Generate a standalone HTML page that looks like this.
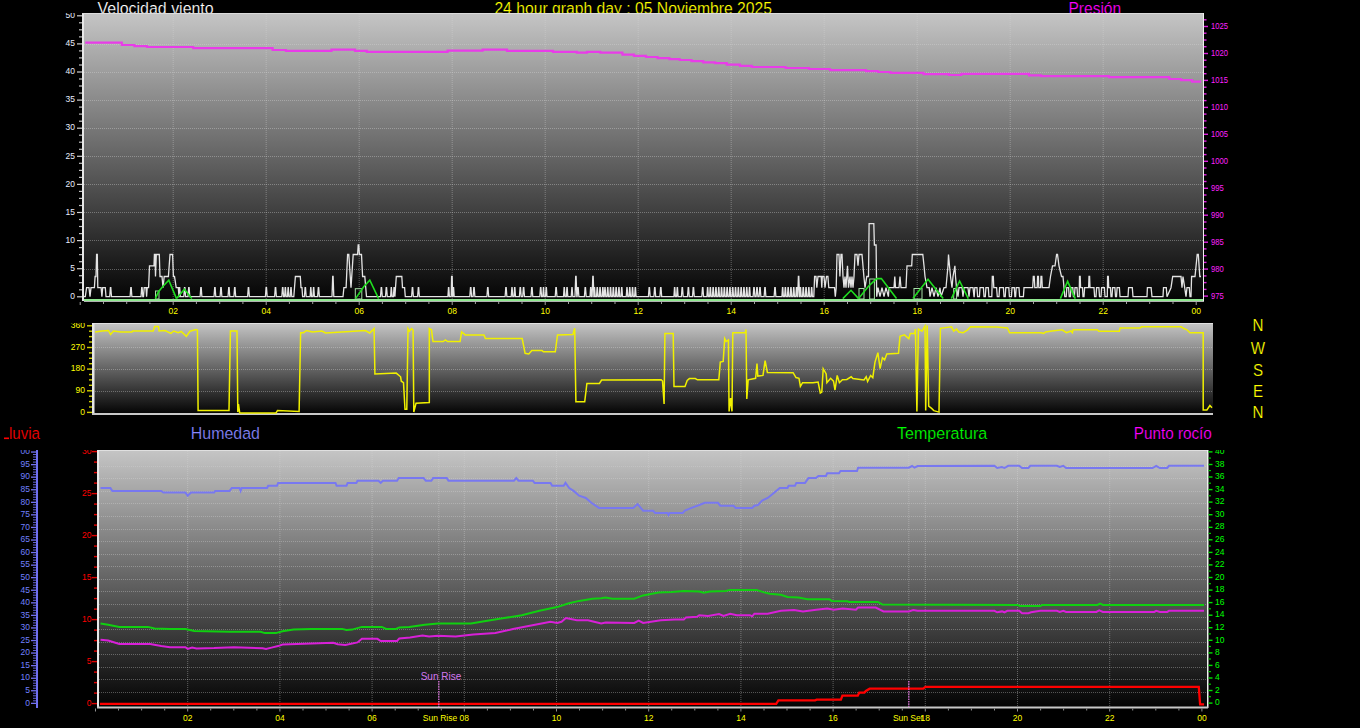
<!DOCTYPE html>
<html><head><meta charset="utf-8"><style>
html,body{margin:0;padding:0;background:#000;width:1360px;height:728px;overflow:hidden}
svg{display:block}
text{font-family:"Liberation Sans", sans-serif}
</style></head><body>
<svg width="1360" height="728" viewBox="0 0 1360 728">
<rect width="1360" height="728" fill="#000"/>
<defs>
<linearGradient id="g1" x1="0" y1="0" x2="0" y2="1"><stop offset="0" stop-color="#c5c5c5"/><stop offset="1" stop-color="#030303"/></linearGradient>
<linearGradient id="g2" x1="0" y1="0" x2="0" y2="1"><stop offset="0" stop-color="#c5c5c5"/><stop offset="1" stop-color="#030303"/></linearGradient>
<linearGradient id="g3" x1="0" y1="0" x2="0" y2="1"><stop offset="0" stop-color="#c5c5c5"/><stop offset="1" stop-color="#030303"/></linearGradient>
<clipPath id="c1"><rect x="84" y="14" width="1119" height="287"/></clipPath>
<clipPath id="c2"><rect x="94" y="324" width="1119" height="90"/></clipPath>
<clipPath id="c3"><rect x="99" y="451" width="1109" height="256"/></clipPath>
<clipPath id="t1"><rect x="0" y="13" width="1360" height="300"/></clipPath>
<clipPath id="t2"><rect x="0" y="323" width="1360" height="100"/></clipPath>
<clipPath id="t3"><rect x="0" y="450" width="1360" height="278"/></clipPath>
</defs>
<text transform="translate(97.60,14) scale(0.9382,1)" x="0" y="0" fill="#ffffff" font-size="17" stroke="#000" stroke-width="0.2">Velocidad viento</text>
<text transform="translate(494.38,14) scale(0.9247,1)" x="0" y="0" fill="#ffff00" font-size="17" stroke="#000" stroke-width="0.2">24 hour graph day : 05 Noviembre 2025</text>
<text transform="translate(1068.49,14) scale(0.9143,1)" x="0" y="0" fill="#ff00ff" font-size="17" stroke="#000" stroke-width="0.2">Presión</text>
<rect x="82" y="13" width="1122" height="288" fill="url(#g1)"/>
<line x1="173.2" y1="14" x2="173.2" y2="300" stroke="#d8d8d8" stroke-width="1" stroke-dasharray="1 1" opacity="0.38"/>
<line x1="266.2" y1="14" x2="266.2" y2="300" stroke="#d8d8d8" stroke-width="1" stroke-dasharray="1 1" opacity="0.38"/>
<line x1="359.2" y1="14" x2="359.2" y2="300" stroke="#d8d8d8" stroke-width="1" stroke-dasharray="1 1" opacity="0.38"/>
<line x1="452.2" y1="14" x2="452.2" y2="300" stroke="#d8d8d8" stroke-width="1" stroke-dasharray="1 1" opacity="0.38"/>
<line x1="545.2" y1="14" x2="545.2" y2="300" stroke="#d8d8d8" stroke-width="1" stroke-dasharray="1 1" opacity="0.38"/>
<line x1="638.2" y1="14" x2="638.2" y2="300" stroke="#d8d8d8" stroke-width="1" stroke-dasharray="1 1" opacity="0.38"/>
<line x1="731.2" y1="14" x2="731.2" y2="300" stroke="#d8d8d8" stroke-width="1" stroke-dasharray="1 1" opacity="0.38"/>
<line x1="824.2" y1="14" x2="824.2" y2="300" stroke="#d8d8d8" stroke-width="1" stroke-dasharray="1 1" opacity="0.38"/>
<line x1="917.2" y1="14" x2="917.2" y2="300" stroke="#d8d8d8" stroke-width="1" stroke-dasharray="1 1" opacity="0.38"/>
<line x1="1010.2" y1="14" x2="1010.2" y2="300" stroke="#d8d8d8" stroke-width="1" stroke-dasharray="1 1" opacity="0.38"/>
<line x1="1103.2" y1="14" x2="1103.2" y2="300" stroke="#d8d8d8" stroke-width="1" stroke-dasharray="1 1" opacity="0.38"/>
<line x1="84" y1="269.5" x2="1203" y2="269.5" stroke="#d8d8d8" stroke-width="1" stroke-dasharray="1 1" opacity="0.38"/>
<line x1="84" y1="240.5" x2="1203" y2="240.5" stroke="#d8d8d8" stroke-width="1" stroke-dasharray="1 1" opacity="0.38"/>
<line x1="84" y1="212.5" x2="1203" y2="212.5" stroke="#d8d8d8" stroke-width="1" stroke-dasharray="1 1" opacity="0.38"/>
<line x1="84" y1="184.5" x2="1203" y2="184.5" stroke="#d8d8d8" stroke-width="1" stroke-dasharray="1 1" opacity="0.38"/>
<line x1="84" y1="156.5" x2="1203" y2="156.5" stroke="#d8d8d8" stroke-width="1" stroke-dasharray="1 1" opacity="0.38"/>
<line x1="84" y1="128.5" x2="1203" y2="128.5" stroke="#d8d8d8" stroke-width="1" stroke-dasharray="1 1" opacity="0.38"/>
<line x1="84" y1="100.5" x2="1203" y2="100.5" stroke="#d8d8d8" stroke-width="1" stroke-dasharray="1 1" opacity="0.38"/>
<line x1="84" y1="72.5" x2="1203" y2="72.5" stroke="#d8d8d8" stroke-width="1" stroke-dasharray="1 1" opacity="0.38"/>
<line x1="84" y1="44.5" x2="1203" y2="44.5" stroke="#d8d8d8" stroke-width="1" stroke-dasharray="1 1" opacity="0.38"/>
<rect x="82" y="13" width="2" height="288" fill="#e8e8e8"/>
<rect x="82" y="13" width="1122" height="1" fill="#dcdcdc"/>
<rect x="1203" y="13" width="1" height="288" fill="#f0f0f0"/>
<rect x="84" y="301" width="1120" height="1" fill="#b0b0b0"/>
<g clip-path="url(#c1)">
<polyline points="85.3,42.6 85.3,42.6 121.8,42.6 121.8,45.0 134.4,45.0 134.4,46.2 147.0,46.2 147.0,47.0 193.2,47.0 193.2,48.2 272.6,48.2 272.6,50.0 285.9,50.0 285.9,50.9 331.5,50.9 331.5,49.7 355.0,49.7 355.0,50.9 366.8,50.9 366.8,51.8 447.6,51.8 447.6,50.6 482.6,50.6 482.6,49.7 507.0,49.7 507.0,50.9 553.0,50.9 553.0,51.8 576.8,51.8 576.8,52.6 587.0,52.6 587.0,51.8 600.3,51.8 600.3,52.6 622.4,52.6 622.4,54.7 634.0,54.7 634.0,55.9 646.0,55.9 646.0,57.0 657.6,57.0 657.6,58.2 669.4,58.2 669.4,59.1 679.7,59.1 679.7,60.0 691.5,60.0 691.5,61.2 703.2,61.2 703.2,62.4 715.0,62.4 715.0,63.2 726.8,63.2 726.8,64.7 740.0,64.7 740.0,65.9 751.8,65.9 751.8,67.0 785.6,67.0 785.6,68.0 809.0,68.0 809.0,69.0 830.0,69.0 830.0,70.2 866.0,70.2 866.0,71.1 878.0,71.1 878.0,72.0 890.4,72.0 890.4,72.9 923.6,72.9 923.6,74.1 949.0,74.1 949.0,75.0 961.3,75.0 961.3,73.8 1029.0,73.8 1029.0,75.3 1041.0,75.3 1041.0,76.2 1109.0,76.2 1109.0,77.1 1169.3,77.1 1169.3,79.0 1181.0,79.0 1181.0,80.1 1192.0,80.1 1192.0,81.7 1201.0,81.7" fill="none" stroke="#e83ce8" stroke-width="2.2" stroke-linejoin="miter" />
<polyline points="84.0,296.7 85.3,296.7 86.6,287.7 89.0,287.7 90.0,296.7 91.0,287.7 94.4,287.7 95.1,276.5 96.0,276.5 96.6,254.5 97.3,254.5 97.8,287.7 101.1,287.7 101.9,296.7 102.7,287.7 105.3,287.7 106.0,296.7 109.7,296.7 110.4,287.7 110.8,287.7 111.5,296.7 130.1,296.7 130.8,287.7 131.2,287.7 131.9,296.7 141.0,296.7 141.7,287.7 142.1,287.7 142.8,296.7 143.5,296.7 144.2,287.7 146.0,287.7 146.6,296.7 147.2,287.7 148.6,287.7 149.5,265.8 154.0,265.8 154.4,254.5 155.0,254.5 155.5,276.5 156.3,254.5 159.3,254.5 160.0,276.5 162.0,276.5 163.0,287.7 164.2,276.5 168.4,276.5 170.0,254.5 172.6,254.5 173.4,276.5 174.5,276.5 176.2,287.7 178.3,287.7 179.0,296.7 178.6,296.7 179.3,287.7 179.7,287.7 180.4,296.7 183.8,296.7 184.5,287.7 184.9,287.7 185.6,296.7 188.0,296.7 188.7,287.7 189.1,287.7 189.8,296.7 200.1,296.7 200.8,287.7 201.2,287.7 201.9,296.7 214.0,296.7 214.7,287.7 215.1,287.7 215.8,296.7 220.1,296.7 220.8,287.7 221.2,287.7 221.9,296.7 228.0,296.7 228.7,287.7 229.1,287.7 229.8,296.7 233.9,296.7 234.6,287.7 235.0,287.7 235.7,296.7 247.6,296.7 248.3,287.7 248.7,287.7 249.4,296.7 265.4,296.7 266.1,287.7 266.5,287.7 267.2,296.7 274.6,296.7 275.3,287.7 275.7,287.7 276.4,296.7 281.8,296.7 282.5,287.7 282.9,287.7 283.6,296.7 284.6,296.7 285.2,287.7 285.5,287.7 286.1,296.7 287.4,296.7 288.1,287.7 288.3,287.7 288.9,296.7 290.2,296.7 290.9,287.7 291.1,287.7 291.8,296.7 293.8,296.7 294.5,287.7 295.4,276.5 300.3,276.5 301.0,287.7 302.0,287.7 302.6,296.7 304.4,296.7 305.1,287.7 305.5,287.7 306.2,296.7 310.1,296.7 310.7,287.7 310.9,287.7 311.6,296.7 312.9,296.7 313.5,287.7 313.8,287.7 314.4,296.7 317.6,296.7 318.3,287.7 318.7,287.7 319.4,296.7 332.0,296.7 332.7,276.5 333.1,276.5 333.8,296.7 343.0,296.7 343.9,287.7 346.1,287.7 347.6,254.5 348.8,254.5 351.0,287.7 353.2,254.5 357.6,254.5 358.2,245.0 358.8,245.0 359.4,254.5 361.5,254.5 362.6,276.5 364.8,276.5 366.5,296.7 380.5,296.7 381.2,287.7 381.6,287.7 382.3,296.7 385.5,296.7 386.2,287.7 386.6,287.7 387.3,296.7 390.6,296.7 391.2,287.7 391.4,287.7 392.1,296.7 393.4,296.7 394.0,287.7 394.2,287.7 394.9,296.7 395.5,287.7 396.3,276.5 401.8,276.5 402.5,287.7 404.6,287.7 405.3,296.7 411.6,296.7 412.3,287.7 412.7,287.7 413.4,296.7 417.6,296.7 418.3,287.7 418.7,287.7 419.4,296.7 447.9,296.7 448.5,287.7 448.8,287.7 449.4,296.7 451.2,296.7 451.6,276.5 452.2,276.5 452.6,296.7 452.8,296.7 453.4,287.7 453.6,287.7 454.2,296.7 469.8,296.7 470.5,287.7 470.9,287.7 471.6,296.7 473.1,296.7 473.8,287.7 474.2,287.7 474.9,296.7 486.9,296.7 487.6,287.7 488.0,287.7 488.7,296.7 505.1,296.7 505.8,287.7 506.2,287.7 506.9,296.7 511.2,296.7 511.9,287.7 512.1,287.7 512.8,296.7 514.0,296.7 514.6,287.7 514.9,287.7 515.5,296.7 519.4,296.7 520.1,287.7 520.5,287.7 521.2,296.7 522.7,296.7 523.4,287.7 523.8,287.7 524.5,296.7 531.0,296.7 531.7,287.7 532.1,287.7 532.8,296.7 539.8,296.7 540.5,287.7 540.9,287.7 541.6,296.7 542.8,296.7 543.4,287.7 543.6,287.7 544.2,296.7 545.5,296.7 546.1,287.7 546.4,287.7 547.0,296.7 555.2,296.7 555.9,287.7 556.3,287.7 557.0,296.7 563.5,296.7 564.1,287.7 564.4,287.7 565.0,296.7 566.3,296.7 566.9,287.7 567.2,287.7 567.8,296.7 571.2,296.7 571.9,287.7 572.1,287.7 572.8,296.7 575.0,296.7 575.7,276.5 576.1,276.5 576.8,296.7 577.1,296.7 577.8,287.7 578.2,287.7 578.9,296.7 584.4,296.7 585.1,287.7 585.5,287.7 586.2,296.7 590.0,296.7 590.6,287.7 590.9,287.7 591.5,296.7 592.1,296.7 592.8,276.5 593.2,276.5 593.9,296.7 593.8,296.7 594.4,287.7 594.6,287.7 595.2,296.7 596.5,296.7 597.1,287.7 597.4,287.7 598.0,296.7 599.3,296.7 599.9,287.7 600.2,287.7 600.8,296.7 602.1,296.7 602.7,287.7 603.0,287.7 603.6,296.7 604.2,296.7 604.9,287.7 605.1,287.7 605.8,296.7 607.0,296.7 607.6,287.7 607.9,287.7 608.5,296.7 609.8,296.7 610.4,287.7 610.7,287.7 611.3,296.7 612.6,296.7 613.2,287.7 613.5,287.7 614.1,296.7 615.4,296.7 616.0,287.7 616.3,287.7 616.9,296.7 618.2,296.7 618.8,287.7 619.1,287.7 619.7,296.7 621.0,296.7 621.6,287.7 621.9,287.7 622.5,296.7 626.2,296.7 626.9,287.7 627.1,287.7 627.8,296.7 629.0,296.7 629.6,287.7 629.9,287.7 630.5,296.7 631.8,296.7 632.4,287.7 632.7,287.7 633.3,296.7 634.6,296.7 635.2,287.7 635.5,287.7 636.1,296.7 648.4,296.7 649.1,287.7 649.5,287.7 650.2,296.7 653.9,296.7 654.6,287.7 655.0,287.7 655.7,296.7 659.9,296.7 660.6,287.7 661.0,287.7 661.7,296.7 673.9,296.7 674.5,287.7 674.8,287.7 675.4,296.7 676.6,296.7 677.2,287.7 677.5,287.7 678.1,296.7 681.4,296.7 682.1,287.7 682.5,287.7 683.2,296.7 687.5,296.7 688.2,287.7 688.6,287.7 689.3,296.7 692.5,296.7 693.2,287.7 693.6,287.7 694.3,296.7 701.8,296.7 702.5,287.7 702.9,287.7 703.6,296.7 706.9,296.7 707.5,287.7 707.8,287.7 708.4,296.7 709.6,296.7 710.2,287.7 710.5,287.7 711.1,296.7 712.4,296.7 713.0,287.7 713.3,287.7 713.9,296.7 715.2,296.7 715.8,287.7 716.1,287.7 716.7,296.7 718.0,296.7 718.6,287.7 718.9,287.7 719.5,296.7 720.8,296.7 721.4,287.7 721.7,287.7 722.3,296.7 723.6,296.7 724.2,287.7 724.5,287.7 725.1,296.7 726.4,296.7 727.0,287.7 727.3,287.7 727.9,296.7 729.2,296.7 729.8,287.7 730.1,287.7 730.7,296.7 732.0,296.7 732.6,287.7 732.9,287.7 733.5,296.7 734.8,296.7 735.4,287.7 735.7,287.7 736.3,296.7 737.6,296.7 738.2,287.7 738.5,287.7 739.1,296.7 740.4,296.7 741.0,287.7 741.3,287.7 741.9,296.7 743.2,296.7 743.8,287.7 744.1,287.7 744.7,296.7 746.0,296.7 746.6,287.7 746.9,287.7 747.5,296.7 748.8,296.7 749.4,287.7 749.7,287.7 750.3,296.7 753.1,296.7 753.8,287.7 754.2,287.7 754.9,296.7 756.1,296.7 756.8,287.7 757.2,287.7 757.9,296.7 759.1,296.7 759.8,287.7 760.2,287.7 760.9,296.7 764.1,296.7 764.8,287.7 765.2,287.7 765.9,296.7 774.1,296.7 774.8,287.7 775.2,287.7 775.9,296.7 781.9,296.7 782.5,287.7 782.8,287.7 783.4,296.7 784.6,296.7 785.2,287.7 785.5,287.7 786.1,296.7 787.4,296.7 788.0,287.7 788.3,287.7 788.9,296.7 790.2,296.7 790.8,287.7 791.1,287.7 791.7,296.7 793.0,296.7 793.6,287.7 793.9,287.7 794.5,296.7 795.8,296.7 796.4,287.7 796.7,287.7 797.3,296.7 797.7,296.7 798.4,276.5 798.8,276.5 799.5,296.7 799.8,296.7 800.4,287.7 800.6,287.7 801.2,296.7 802.5,296.7 803.1,287.7 803.4,287.7 804.0,296.7 805.3,296.7 805.9,287.7 806.2,287.7 806.8,296.7 808.1,296.7 808.7,287.7 809.0,287.7 809.6,296.7 810.9,296.7 811.5,287.7 811.8,287.7 812.4,296.7 813.8,296.7 814.6,276.5 816.0,276.5 816.8,287.7 818.0,276.5 821.2,276.5 821.8,287.7 822.3,276.5 824.0,276.5 825.0,287.7 826.5,276.5 827.9,276.5 828.8,287.7 834.5,287.7 835.3,296.7 836.2,287.7 837.0,254.5 839.0,254.5 839.9,276.5 841.0,254.5 842.0,254.5 843.0,276.5 844.0,287.7 845.0,276.5 846.0,287.7 847.5,265.8 848.5,287.7 850.0,276.5 851.0,287.7 852.0,276.5 853.0,287.7 854.0,276.5 855.0,254.5 857.0,254.5 858.0,265.8 859.0,254.5 862.0,254.5 863.9,276.5 865.0,287.7 866.8,276.5 868.5,276.5 869.1,223.6 873.8,223.6 874.4,245.0 876.1,245.0 876.7,296.7 878.0,287.7 880.0,296.7 882.0,287.7 884.0,296.7 886.0,287.7 888.4,296.7 889.0,287.7 894.0,287.7 894.8,276.5 895.5,287.7 899.0,287.7 900.0,276.5 901.0,287.7 906.0,287.7 907.0,265.8 911.7,265.8 912.3,254.5 922.8,254.5 924.0,265.8 925.0,276.5 927.0,287.7 929.2,287.7 930.0,296.7 932.0,287.7 934.0,296.7 936.0,287.7 938.0,296.7 940.0,287.7 941.0,296.7 944.0,287.7 946.0,287.7 947.0,276.5 948.0,265.8 948.5,254.5 949.5,265.8 950.5,276.5 952.0,287.7 953.0,276.5 954.9,265.8 955.5,276.5 956.5,287.7 958.0,296.7 959.0,287.7 962.0,287.7 963.0,296.7 964.0,287.7 968.0,287.7 969.0,296.7 970.0,287.7 973.0,287.7 974.0,296.7 974.2,296.7 974.2,296.7 974.8,287.7 977.0,287.7 977.6,296.7 979.4,296.7 980.0,287.7 983.4,287.7 984.0,296.7 985.3,296.7 985.9,287.7 988.3,287.7 988.9,296.7 991.8,296.7 992.3,276.5 993.3,276.5 993.8,287.7 996.6,287.7 997.3,296.7 999.0,296.7 999.6,287.7 1003.4,287.7 1004.0,296.7 1005.2,296.7 1005.8,287.7 1008.8,287.7 1009.4,296.7 1011.4,296.7 1012.0,287.7 1014.3,287.7 1014.9,296.7 1015.6,296.7 1016.2,287.7 1019.0,287.7 1019.6,296.7 1023.4,296.7 1024.0,287.7 1032.7,287.7 1033.3,276.5 1034.2,276.5 1034.8,287.7 1037.2,287.7 1037.6,276.5 1038.4,276.5 1038.8,287.7 1040.6,287.7 1041.0,276.5 1041.8,276.5 1042.3,287.7 1049.0,287.7 1050.5,276.5 1052.5,265.8 1055.0,265.8 1056.6,254.5 1057.5,254.5 1059.0,265.8 1061.5,276.5 1063.0,276.5 1064.8,296.7 1066.2,296.7 1066.8,287.7 1068.6,287.7 1069.2,296.7 1070.4,296.7 1071.0,287.7 1072.8,287.7 1073.4,296.7 1074.4,296.7 1075.0,287.7 1077.0,287.7 1077.6,296.7 1079.2,296.7 1079.5,276.5 1080.2,276.5 1080.6,287.7 1082.5,287.7 1083.0,296.7 1084.0,296.7 1084.6,287.7 1088.6,287.7 1089.0,276.5 1089.6,276.5 1090.0,287.7 1094.0,287.7 1094.6,296.7 1096.0,296.7 1096.6,287.7 1098.9,287.7 1099.5,296.7 1101.0,296.7 1101.6,287.7 1104.4,287.7 1105.0,296.7 1107.3,296.7 1107.6,276.5 1108.3,276.5 1108.7,287.7 1110.5,287.7 1111.0,296.7 1112.0,296.7 1112.6,287.7 1114.9,287.7 1115.5,296.7 1116.5,296.7 1117.1,287.7 1119.4,287.7 1120.0,296.7 1128.0,296.7 1128.6,287.7 1132.3,287.7 1133.0,296.7 1147.0,296.7 1147.4,287.7 1151.1,287.7 1152.0,296.7 1163.0,296.7 1163.5,287.7 1166.3,287.7 1167.0,296.7 1171.0,287.7 1172.7,276.5 1181.0,276.5 1182.0,287.7 1183.0,276.5 1184.7,287.7 1186.0,296.7 1187.0,287.7 1189.3,287.7 1190.0,296.7 1191.0,296.7 1191.6,276.5 1195.0,276.5 1197.2,254.5 1198.3,254.5 1199.8,276.5 1201.0,276.5" fill="none" stroke="#e4e4e4" stroke-width="1.3" stroke-linejoin="miter" />
<rect x="84" y="299" width="1119" height="2" fill="#90e890"/>
<rect x="155.5" y="291" width="3.5" height="8" fill="none" stroke="#a8e0a8" stroke-width="1"/>
<rect x="355.3" y="288.7" width="6.5" height="10.300000000000011" fill="none" stroke="#a8e0a8" stroke-width="1"/>
<rect x="859" y="288.5" width="5" height="10.5" fill="none" stroke="#a8e0a8" stroke-width="1"/>
<rect x="869.7" y="279" width="4.699999999999932" height="20" fill="none" stroke="#a8e0a8" stroke-width="1"/>
<rect x="914" y="288.5" width="8" height="10.5" fill="none" stroke="#a8e0a8" stroke-width="1"/>
<rect x="953.7" y="288.5" width="2.8999999999999773" height="10.5" fill="none" stroke="#a8e0a8" stroke-width="1"/>
<polyline points="155.3,298.6 158.5,291.8 163.0,286.2 168.8,280.2 176.5,298.6" fill="none" stroke="#20dd20" stroke-width="1.6" stroke-linejoin="miter" />
<polyline points="176.5,298.6 184.4,289.2 191.8,298.6" fill="none" stroke="#20dd20" stroke-width="1.6" stroke-linejoin="miter" />
<polyline points="355.5,298.6 363.7,286.8 369.8,280.2 378.6,298.6" fill="none" stroke="#20dd20" stroke-width="1.6" stroke-linejoin="miter" />
<polyline points="842.8,298.6 851.0,290.3 858.6,298.6" fill="none" stroke="#20dd20" stroke-width="1.6" stroke-linejoin="miter" />
<polyline points="858.6,298.6 868.5,286.2 876.7,278.6 881.4,278.6 896.5,298.6" fill="none" stroke="#20dd20" stroke-width="1.6" stroke-linejoin="miter" />
<polyline points="912.9,298.6 928.0,279.2 943.2,298.6" fill="none" stroke="#20dd20" stroke-width="1.6" stroke-linejoin="miter" />
<polyline points="951.4,298.6 959.6,281.0 968.3,298.6" fill="none" stroke="#20dd20" stroke-width="1.6" stroke-linejoin="miter" />
<polyline points="1060.4,298.6 1067.6,281.3 1075.3,298.6" fill="none" stroke="#20dd20" stroke-width="1.6" stroke-linejoin="miter" />
</g>
<g clip-path="url(#t1)">
<rect x="77" y="296.2" width="5" height="1.2" fill="#d0d0d0"/>
<text x="75" y="299.0" fill="#e8eeff" font-size="8.5" text-anchor="end" >0</text>
<rect x="79" y="289.2" width="3" height="1.2" fill="#c0c0c0"/>
<rect x="79" y="282.1" width="3" height="1.2" fill="#c0c0c0"/>
<rect x="79" y="275.1" width="3" height="1.2" fill="#c0c0c0"/>
<rect x="77" y="268.1" width="5" height="1.2" fill="#d0d0d0"/>
<text x="75" y="270.9" fill="#e8eeff" font-size="8.5" text-anchor="end" >5</text>
<rect x="79" y="261.1" width="3" height="1.2" fill="#c0c0c0"/>
<rect x="79" y="254.0" width="3" height="1.2" fill="#c0c0c0"/>
<rect x="79" y="247.0" width="3" height="1.2" fill="#c0c0c0"/>
<rect x="77" y="240.0" width="5" height="1.2" fill="#d0d0d0"/>
<text x="75" y="242.8" fill="#e8eeff" font-size="8.5" text-anchor="end" >10</text>
<rect x="79" y="233.0" width="3" height="1.2" fill="#c0c0c0"/>
<rect x="79" y="225.9" width="3" height="1.2" fill="#c0c0c0"/>
<rect x="79" y="218.9" width="3" height="1.2" fill="#c0c0c0"/>
<rect x="77" y="211.9" width="5" height="1.2" fill="#d0d0d0"/>
<text x="75" y="214.7" fill="#e8eeff" font-size="8.5" text-anchor="end" >15</text>
<rect x="79" y="204.9" width="3" height="1.2" fill="#c0c0c0"/>
<rect x="79" y="197.8" width="3" height="1.2" fill="#c0c0c0"/>
<rect x="79" y="190.8" width="3" height="1.2" fill="#c0c0c0"/>
<rect x="77" y="183.8" width="5" height="1.2" fill="#d0d0d0"/>
<text x="75" y="186.6" fill="#e8eeff" font-size="8.5" text-anchor="end" >20</text>
<rect x="79" y="176.8" width="3" height="1.2" fill="#c0c0c0"/>
<rect x="79" y="169.8" width="3" height="1.2" fill="#c0c0c0"/>
<rect x="79" y="162.7" width="3" height="1.2" fill="#c0c0c0"/>
<rect x="77" y="155.7" width="5" height="1.2" fill="#d0d0d0"/>
<text x="75" y="158.5" fill="#e8eeff" font-size="8.5" text-anchor="end" >25</text>
<rect x="79" y="148.7" width="3" height="1.2" fill="#c0c0c0"/>
<rect x="79" y="141.6" width="3" height="1.2" fill="#c0c0c0"/>
<rect x="79" y="134.6" width="3" height="1.2" fill="#c0c0c0"/>
<rect x="77" y="127.6" width="5" height="1.2" fill="#d0d0d0"/>
<text x="75" y="130.4" fill="#e8eeff" font-size="8.5" text-anchor="end" >30</text>
<rect x="79" y="120.6" width="3" height="1.2" fill="#c0c0c0"/>
<rect x="79" y="113.5" width="3" height="1.2" fill="#c0c0c0"/>
<rect x="79" y="106.5" width="3" height="1.2" fill="#c0c0c0"/>
<rect x="77" y="99.5" width="5" height="1.2" fill="#d0d0d0"/>
<text x="75" y="102.29999999999997" fill="#e8eeff" font-size="8.5" text-anchor="end" >35</text>
<rect x="79" y="92.5" width="3" height="1.2" fill="#c0c0c0"/>
<rect x="79" y="85.4" width="3" height="1.2" fill="#c0c0c0"/>
<rect x="79" y="78.4" width="3" height="1.2" fill="#c0c0c0"/>
<rect x="77" y="71.4" width="5" height="1.2" fill="#d0d0d0"/>
<text x="75" y="74.19999999999997" fill="#e8eeff" font-size="8.5" text-anchor="end" >40</text>
<rect x="79" y="64.4" width="3" height="1.2" fill="#c0c0c0"/>
<rect x="79" y="57.3" width="3" height="1.2" fill="#c0c0c0"/>
<rect x="79" y="50.3" width="3" height="1.2" fill="#c0c0c0"/>
<rect x="77" y="43.3" width="5" height="1.2" fill="#d0d0d0"/>
<text x="75" y="46.09999999999998" fill="#e8eeff" font-size="8.5" text-anchor="end" >45</text>
<rect x="79" y="36.3" width="3" height="1.2" fill="#c0c0c0"/>
<rect x="79" y="29.2" width="3" height="1.2" fill="#c0c0c0"/>
<rect x="79" y="22.2" width="3" height="1.2" fill="#c0c0c0"/>
<rect x="77" y="15.2" width="5" height="1.2" fill="#d0d0d0"/>
<text x="75" y="17.99999999999999" fill="#e8eeff" font-size="8.5" text-anchor="end" >50</text>
<rect x="1204" y="295.4" width="4" height="1.4" fill="#e020e0"/>
<text transform="translate(1211,299.00) scale(0.9,1)" fill="#ff20ff" font-size="8.5">975</text>
<rect x="1204" y="288.7" width="2.5" height="1.4" fill="#e020e0"/>
<rect x="1204" y="281.9" width="2.5" height="1.4" fill="#e020e0"/>
<rect x="1204" y="275.2" width="2.5" height="1.4" fill="#e020e0"/>
<rect x="1204" y="268.4" width="4" height="1.4" fill="#e020e0"/>
<text transform="translate(1211,272.04) scale(0.9,1)" fill="#ff20ff" font-size="8.5">980</text>
<rect x="1204" y="261.7" width="2.5" height="1.4" fill="#e020e0"/>
<rect x="1204" y="255.0" width="2.5" height="1.4" fill="#e020e0"/>
<rect x="1204" y="248.2" width="2.5" height="1.4" fill="#e020e0"/>
<rect x="1204" y="241.5" width="4" height="1.4" fill="#e020e0"/>
<text transform="translate(1211,245.08) scale(0.9,1)" fill="#ff20ff" font-size="8.5">985</text>
<rect x="1204" y="234.7" width="2.5" height="1.4" fill="#e020e0"/>
<rect x="1204" y="228.0" width="2.5" height="1.4" fill="#e020e0"/>
<rect x="1204" y="221.3" width="2.5" height="1.4" fill="#e020e0"/>
<rect x="1204" y="214.5" width="4" height="1.4" fill="#e020e0"/>
<text transform="translate(1211,218.12) scale(0.9,1)" fill="#ff20ff" font-size="8.5">990</text>
<rect x="1204" y="207.8" width="2.5" height="1.4" fill="#e020e0"/>
<rect x="1204" y="201.0" width="2.5" height="1.4" fill="#e020e0"/>
<rect x="1204" y="194.3" width="2.5" height="1.4" fill="#e020e0"/>
<rect x="1204" y="187.6" width="4" height="1.4" fill="#e020e0"/>
<text transform="translate(1211,191.16) scale(0.9,1)" fill="#ff20ff" font-size="8.5">995</text>
<rect x="1204" y="180.8" width="2.5" height="1.4" fill="#e020e0"/>
<rect x="1204" y="174.1" width="2.5" height="1.4" fill="#e020e0"/>
<rect x="1204" y="167.3" width="2.5" height="1.4" fill="#e020e0"/>
<rect x="1204" y="160.6" width="4" height="1.4" fill="#e020e0"/>
<text transform="translate(1211,164.20) scale(0.9,1)" fill="#ff20ff" font-size="8.5">1000</text>
<rect x="1204" y="153.9" width="2.5" height="1.4" fill="#e020e0"/>
<rect x="1204" y="147.1" width="2.5" height="1.4" fill="#e020e0"/>
<rect x="1204" y="140.4" width="2.5" height="1.4" fill="#e020e0"/>
<rect x="1204" y="133.6" width="4" height="1.4" fill="#e020e0"/>
<text transform="translate(1211,137.24) scale(0.9,1)" fill="#ff20ff" font-size="8.5">1005</text>
<rect x="1204" y="126.9" width="2.5" height="1.4" fill="#e020e0"/>
<rect x="1204" y="120.2" width="2.5" height="1.4" fill="#e020e0"/>
<rect x="1204" y="113.4" width="2.5" height="1.4" fill="#e020e0"/>
<rect x="1204" y="106.7" width="4" height="1.4" fill="#e020e0"/>
<text transform="translate(1211,110.28) scale(0.9,1)" fill="#ff20ff" font-size="8.5">1010</text>
<rect x="1204" y="99.9" width="2.5" height="1.4" fill="#e020e0"/>
<rect x="1204" y="93.2" width="2.5" height="1.4" fill="#e020e0"/>
<rect x="1204" y="86.5" width="2.5" height="1.4" fill="#e020e0"/>
<rect x="1204" y="79.7" width="4" height="1.4" fill="#e020e0"/>
<text transform="translate(1211,83.32) scale(0.9,1)" fill="#ff20ff" font-size="8.5">1015</text>
<rect x="1204" y="73.0" width="2.5" height="1.4" fill="#e020e0"/>
<rect x="1204" y="66.2" width="2.5" height="1.4" fill="#e020e0"/>
<rect x="1204" y="59.5" width="2.5" height="1.4" fill="#e020e0"/>
<rect x="1204" y="52.8" width="4" height="1.4" fill="#e020e0"/>
<text transform="translate(1211,56.36) scale(0.9,1)" fill="#ff20ff" font-size="8.5">1020</text>
<rect x="1204" y="46.0" width="2.5" height="1.4" fill="#e020e0"/>
<rect x="1204" y="39.3" width="2.5" height="1.4" fill="#e020e0"/>
<rect x="1204" y="32.5" width="2.5" height="1.4" fill="#e020e0"/>
<rect x="1204" y="25.8" width="4" height="1.4" fill="#e020e0"/>
<text transform="translate(1211,29.40) scale(0.9,1)" fill="#ff20ff" font-size="8.5">1025</text>
<rect x="1204" y="19.1" width="2.5" height="1.4" fill="#e020e0"/>
</g>
<text x="173.2" y="314" fill="#ffff00" font-size="8.5" text-anchor="middle" >02</text>
<text x="266.2" y="314" fill="#ffff00" font-size="8.5" text-anchor="middle" >04</text>
<text x="359.2" y="314" fill="#ffff00" font-size="8.5" text-anchor="middle" >06</text>
<text x="452.2" y="314" fill="#ffff00" font-size="8.5" text-anchor="middle" >08</text>
<text x="545.2" y="314" fill="#ffff00" font-size="8.5" text-anchor="middle" >10</text>
<text x="638.2" y="314" fill="#ffff00" font-size="8.5" text-anchor="middle" >12</text>
<text x="731.2" y="314" fill="#ffff00" font-size="8.5" text-anchor="middle" >14</text>
<text x="824.2" y="314" fill="#ffff00" font-size="8.5" text-anchor="middle" >16</text>
<text x="917.2" y="314" fill="#ffff00" font-size="8.5" text-anchor="middle" >18</text>
<text x="1010.2" y="314" fill="#ffff00" font-size="8.5" text-anchor="middle" >20</text>
<text x="1103.2" y="314" fill="#ffff00" font-size="8.5" text-anchor="middle" >22</text>
<text x="1196.2" y="314" fill="#ffff00" font-size="8.5" text-anchor="middle" >00</text>
<rect x="79.7" y="302" width="1" height="3" fill="#a0a0a0"/>
<rect x="103.0" y="302" width="1" height="2" fill="#a0a0a0"/>
<rect x="126.2" y="302" width="1" height="2" fill="#a0a0a0"/>
<rect x="149.4" y="302" width="1" height="2" fill="#a0a0a0"/>
<rect x="172.7" y="302" width="1" height="3" fill="#a0a0a0"/>
<rect x="195.9" y="302" width="1" height="2" fill="#a0a0a0"/>
<rect x="219.2" y="302" width="1" height="2" fill="#a0a0a0"/>
<rect x="242.4" y="302" width="1" height="2" fill="#a0a0a0"/>
<rect x="265.7" y="302" width="1" height="3" fill="#a0a0a0"/>
<rect x="288.9" y="302" width="1" height="2" fill="#a0a0a0"/>
<rect x="312.2" y="302" width="1" height="2" fill="#a0a0a0"/>
<rect x="335.4" y="302" width="1" height="2" fill="#a0a0a0"/>
<rect x="358.7" y="302" width="1" height="3" fill="#a0a0a0"/>
<rect x="381.9" y="302" width="1" height="2" fill="#a0a0a0"/>
<rect x="405.2" y="302" width="1" height="2" fill="#a0a0a0"/>
<rect x="428.4" y="302" width="1" height="2" fill="#a0a0a0"/>
<rect x="451.7" y="302" width="1" height="3" fill="#a0a0a0"/>
<rect x="474.9" y="302" width="1" height="2" fill="#a0a0a0"/>
<rect x="498.2" y="302" width="1" height="2" fill="#a0a0a0"/>
<rect x="521.5" y="302" width="1" height="2" fill="#a0a0a0"/>
<rect x="544.7" y="302" width="1" height="3" fill="#a0a0a0"/>
<rect x="568.0" y="302" width="1" height="2" fill="#a0a0a0"/>
<rect x="591.2" y="302" width="1" height="2" fill="#a0a0a0"/>
<rect x="614.5" y="302" width="1" height="2" fill="#a0a0a0"/>
<rect x="637.7" y="302" width="1" height="3" fill="#a0a0a0"/>
<rect x="661.0" y="302" width="1" height="2" fill="#a0a0a0"/>
<rect x="684.2" y="302" width="1" height="2" fill="#a0a0a0"/>
<rect x="707.5" y="302" width="1" height="2" fill="#a0a0a0"/>
<rect x="730.7" y="302" width="1" height="3" fill="#a0a0a0"/>
<rect x="754.0" y="302" width="1" height="2" fill="#a0a0a0"/>
<rect x="777.2" y="302" width="1" height="2" fill="#a0a0a0"/>
<rect x="800.5" y="302" width="1" height="2" fill="#a0a0a0"/>
<rect x="823.7" y="302" width="1" height="3" fill="#a0a0a0"/>
<rect x="847.0" y="302" width="1" height="2" fill="#a0a0a0"/>
<rect x="870.2" y="302" width="1" height="2" fill="#a0a0a0"/>
<rect x="893.5" y="302" width="1" height="2" fill="#a0a0a0"/>
<rect x="916.7" y="302" width="1" height="3" fill="#a0a0a0"/>
<rect x="940.0" y="302" width="1" height="2" fill="#a0a0a0"/>
<rect x="963.2" y="302" width="1" height="2" fill="#a0a0a0"/>
<rect x="986.5" y="302" width="1" height="2" fill="#a0a0a0"/>
<rect x="1009.7" y="302" width="1" height="3" fill="#a0a0a0"/>
<rect x="1033.0" y="302" width="1" height="2" fill="#a0a0a0"/>
<rect x="1056.2" y="302" width="1" height="2" fill="#a0a0a0"/>
<rect x="1079.5" y="302" width="1" height="2" fill="#a0a0a0"/>
<rect x="1102.7" y="302" width="1" height="3" fill="#a0a0a0"/>
<rect x="1126.0" y="302" width="1" height="2" fill="#a0a0a0"/>
<rect x="1149.2" y="302" width="1" height="2" fill="#a0a0a0"/>
<rect x="1172.5" y="302" width="1" height="2" fill="#a0a0a0"/>
<rect x="1195.7" y="302" width="1" height="3" fill="#a0a0a0"/>
<rect x="92" y="323" width="1121" height="91" fill="url(#g2)"/>
<line x1="95" y1="391.5" x2="1212" y2="391.5" stroke="#e0e0e0" stroke-width="1" stroke-dasharray="1 1" opacity="0.35"/>
<line x1="95" y1="369.5" x2="1212" y2="369.5" stroke="#e0e0e0" stroke-width="1" stroke-dasharray="1 1" opacity="0.35"/>
<line x1="95" y1="347.5" x2="1212" y2="347.5" stroke="#e0e0e0" stroke-width="1" stroke-dasharray="1 1" opacity="0.35"/>
<rect x="93" y="323" width="1120" height="1" fill="#e0e0e0"/>
<rect x="92" y="323" width="2.5" height="92" fill="#e8e8e8"/>
<rect x="92" y="413" width="1121" height="2" fill="#c8c8c8"/>
<g clip-path="url(#c2)">
<polyline points="95.1,332.0 101.8,331.0 108.4,330.5 110.6,334.5 113.5,331.0 120.9,332.0 131.9,332.0 132.6,331.0 153.2,331.0 154.7,326.5 158.4,326.5 159.1,331.0 165.0,330.5 170.9,333.4 173.8,331.0 178.2,332.7 181.2,331.5 186.3,336.4 190.0,331.2 195.9,329.5 197.4,330.0 198.1,410.6 229.0,410.6 230.4,331.0 237.0,331.0 237.8,412.1 238.5,404.0 239.7,412.9 276.0,412.9 277.5,410.6 299.1,411.4 300.6,332.7 303.5,332.7 306.5,330.5 312.4,332.0 321.9,331.0 325.6,333.0 341.8,332.0 365.3,330.5 369.7,333.0 374.1,328.6 374.9,373.9 396.2,373.1 400.6,376.8 401.3,381.2 403.5,382.7 405.0,409.2 406.8,409.2 408.0,328.6 409.4,331.2 411.6,328.6 413.1,330.0 413.8,412.1 416.0,403.3 429.3,402.6 429.3,328.6 431.5,329.8 433.0,341.5 443.2,341.5 445.4,340.0 447.6,341.5 460.1,341.5 461.6,332.0 465.3,334.9 484.0,334.9 485.4,338.6 522.2,338.6 525.1,353.3 528.8,354.0 531.8,350.6 542.0,350.6 543.5,351.8 555.3,351.8 557.5,334.9 572.9,334.5 574.7,328.3 575.9,401.8 584.7,401.8 586.9,383.4 599.4,383.4 601.6,380.0 661.2,379.8 662.5,381.0 664.1,404.0 664.9,333.4 673.2,333.4 674.0,386.4 685.0,386.4 687.2,380.5 689.4,378.6 695.3,378.6 697.5,379.8 718.8,379.8 720.3,362.1 723.2,361.4 724.7,338.6 726.2,341.5 728.4,340.0 729.1,411.4 730.6,398.1 732.0,411.4 732.8,332.7 745.3,332.7 746.0,329.5 746.8,398.9 748.2,379.8 755.6,378.3 757.0,363.6 757.8,376.1 763.0,375.4 765.1,360.6 767.4,372.4 793.1,372.7 796.0,377.6 799.0,378.3 800.4,386.4 802.6,382.7 813.0,382.7 818.1,382.0 820.3,393.0 821.8,392.0 823.2,368.7 826.2,373.9 826.9,382.7 830.6,378.3 833.5,381.2 835.0,390.0 837.2,375.4 839.4,382.7 842.4,379.8 846.8,379.5 851.2,376.8 852.9,378.6 864.0,380.0 866.2,376.8 867.6,381.5 870.6,375.4 872.8,377.6 875.0,362.1 877.9,352.6 880.1,368.7 882.4,357.7 884.6,359.9 886.8,354.0 898.5,353.3 900.0,336.4 904.4,334.9 908.8,338.6 910.3,333.4 914.7,333.4 915.4,329.0 916.9,411.4 918.4,329.0 922.0,331.2 925.0,326.1 925.7,410.6 927.2,325.4 928.7,406.2 931.6,408.4 933.8,410.6 939.0,412.1 940.4,328.3 951.5,326.8 953.7,331.2 956.6,329.0 958.8,332.0 963.2,332.7 967.6,329.8 970.6,326.8 997.0,327.1 1007.4,328.0 1009.6,332.7 1041.2,332.7 1043.7,333.4 1045.6,332.0 1051.8,331.0 1062.0,329.8 1066.5,332.7 1070.9,331.0 1072.4,332.7 1073.0,329.8 1097.4,329.8 1098.8,331.2 1119.4,331.2 1120.1,328.0 1140.0,328.0 1141.5,326.8 1181.2,326.8 1183.4,328.3 1187.0,329.8 1190.0,332.7 1203.2,332.7 1203.2,409.9 1206.9,409.9 1209.9,405.5 1212.0,407.7" fill="none" stroke="#f0f000" stroke-width="1.5" stroke-linejoin="miter" />
</g>
<g clip-path="url(#t2)">
<rect x="87" y="411.7" width="5" height="1.4" fill="#d0d000"/>
<text x="85" y="414.6" fill="#ffff00" font-size="8.5" text-anchor="end" >0</text>
<rect x="89" y="406.3" width="3" height="1.4" fill="#d0d000"/>
<rect x="89" y="400.9" width="3" height="1.4" fill="#d0d000"/>
<rect x="89" y="395.5" width="3" height="1.4" fill="#d0d000"/>
<rect x="87" y="390.1" width="5" height="1.4" fill="#d0d000"/>
<text x="85" y="392.95000000000005" fill="#ffff00" font-size="8.5" text-anchor="end" >90</text>
<rect x="89" y="384.6" width="3" height="1.4" fill="#d0d000"/>
<rect x="89" y="379.2" width="3" height="1.4" fill="#d0d000"/>
<rect x="89" y="373.8" width="3" height="1.4" fill="#d0d000"/>
<rect x="87" y="368.4" width="5" height="1.4" fill="#d0d000"/>
<text x="85" y="371.3" fill="#ffff00" font-size="8.5" text-anchor="end" >180</text>
<rect x="89" y="363.0" width="3" height="1.4" fill="#d0d000"/>
<rect x="89" y="357.6" width="3" height="1.4" fill="#d0d000"/>
<rect x="89" y="352.2" width="3" height="1.4" fill="#d0d000"/>
<rect x="87" y="346.8" width="5" height="1.4" fill="#d0d000"/>
<text x="85" y="349.65000000000003" fill="#ffff00" font-size="8.5" text-anchor="end" >270</text>
<rect x="89" y="341.3" width="3" height="1.4" fill="#d0d000"/>
<rect x="89" y="335.9" width="3" height="1.4" fill="#d0d000"/>
<rect x="89" y="330.5" width="3" height="1.4" fill="#d0d000"/>
<rect x="87" y="325.1" width="5" height="1.4" fill="#d0d000"/>
<text x="85" y="328.00000000000006" fill="#ffff00" font-size="8.5" text-anchor="end" >360</text>
</g>
<text transform="translate(1258,331) scale(0.92,1)" text-anchor="middle" fill="#ffff00" font-size="16.5" stroke="#000" stroke-width="0.2">N</text>
<text transform="translate(1258,354) scale(0.92,1)" text-anchor="middle" fill="#ffff00" font-size="16.5" stroke="#000" stroke-width="0.2">W</text>
<text transform="translate(1258,376) scale(0.92,1)" text-anchor="middle" fill="#ffff00" font-size="16.5" stroke="#000" stroke-width="0.2">S</text>
<text transform="translate(1258,397.3) scale(0.92,1)" text-anchor="middle" fill="#ffff00" font-size="16.5" stroke="#000" stroke-width="0.2">E</text>
<text transform="translate(1258,418) scale(0.92,1)" text-anchor="middle" fill="#ffff00" font-size="16.5" stroke="#000" stroke-width="0.2">N</text>
<rect x="4" y="437.5" width="5" height="1.6" fill="#ff0000"/>
<text transform="translate(9.01,439) scale(0.8853,1)" x="0" y="0" fill="#ff0000" font-size="17" stroke="#000" stroke-width="0.2">luvia</text>
<text transform="translate(190.86,439) scale(0.9375,1)" x="0" y="0" fill="#8888ff" font-size="17" stroke="#000" stroke-width="0.2">Humedad</text>
<text transform="translate(896.90,439) scale(0.9479,1)" x="0" y="0" fill="#00ff00" font-size="17" stroke="#000" stroke-width="0.2">Temperatura</text>
<text transform="translate(1133.70,439) scale(0.9000,1)" x="0" y="0" fill="#ff00ff" font-size="17" stroke="#000" stroke-width="0.2">Punto rocío</text>
<rect x="97" y="450" width="1111" height="258" fill="url(#g3)"/>
<line x1="187.7" y1="451" x2="187.7" y2="706" stroke="#d8d8d8" stroke-width="1" stroke-dasharray="1 1" opacity="0.38"/>
<line x1="279.9" y1="451" x2="279.9" y2="706" stroke="#d8d8d8" stroke-width="1" stroke-dasharray="1 1" opacity="0.38"/>
<line x1="372.1" y1="451" x2="372.1" y2="706" stroke="#d8d8d8" stroke-width="1" stroke-dasharray="1 1" opacity="0.38"/>
<line x1="464.3" y1="451" x2="464.3" y2="706" stroke="#d8d8d8" stroke-width="1" stroke-dasharray="1 1" opacity="0.38"/>
<line x1="556.5" y1="451" x2="556.5" y2="706" stroke="#d8d8d8" stroke-width="1" stroke-dasharray="1 1" opacity="0.38"/>
<line x1="648.7" y1="451" x2="648.7" y2="706" stroke="#d8d8d8" stroke-width="1" stroke-dasharray="1 1" opacity="0.38"/>
<line x1="740.9" y1="451" x2="740.9" y2="706" stroke="#d8d8d8" stroke-width="1" stroke-dasharray="1 1" opacity="0.38"/>
<line x1="833.1" y1="451" x2="833.1" y2="706" stroke="#d8d8d8" stroke-width="1" stroke-dasharray="1 1" opacity="0.38"/>
<line x1="925.3000000000001" y1="451" x2="925.3000000000001" y2="706" stroke="#d8d8d8" stroke-width="1" stroke-dasharray="1 1" opacity="0.38"/>
<line x1="1017.5" y1="451" x2="1017.5" y2="706" stroke="#d8d8d8" stroke-width="1" stroke-dasharray="1 1" opacity="0.38"/>
<line x1="1109.7" y1="451" x2="1109.7" y2="706" stroke="#d8d8d8" stroke-width="1" stroke-dasharray="1 1" opacity="0.38"/>
<line x1="438.8" y1="451" x2="438.8" y2="706" stroke="#d8d8d8" stroke-width="1" stroke-dasharray="1 1" opacity="0.38"/>
<line x1="908.8" y1="451" x2="908.8" y2="706" stroke="#d8d8d8" stroke-width="1" stroke-dasharray="1 1" opacity="0.38"/>
<line x1="99" y1="692.5" x2="1207" y2="692.5" stroke="#d8d8d8" stroke-width="1" stroke-dasharray="1 1" opacity="0.35"/>
<line x1="99" y1="679.5" x2="1207" y2="679.5" stroke="#d8d8d8" stroke-width="1" stroke-dasharray="1 1" opacity="0.35"/>
<line x1="99" y1="667.5" x2="1207" y2="667.5" stroke="#d8d8d8" stroke-width="1" stroke-dasharray="1 1" opacity="0.35"/>
<line x1="99" y1="654.5" x2="1207" y2="654.5" stroke="#d8d8d8" stroke-width="1" stroke-dasharray="1 1" opacity="0.35"/>
<line x1="99" y1="642.5" x2="1207" y2="642.5" stroke="#d8d8d8" stroke-width="1" stroke-dasharray="1 1" opacity="0.35"/>
<line x1="99" y1="629.5" x2="1207" y2="629.5" stroke="#d8d8d8" stroke-width="1" stroke-dasharray="1 1" opacity="0.35"/>
<line x1="99" y1="617.5" x2="1207" y2="617.5" stroke="#d8d8d8" stroke-width="1" stroke-dasharray="1 1" opacity="0.35"/>
<line x1="99" y1="604.5" x2="1207" y2="604.5" stroke="#d8d8d8" stroke-width="1" stroke-dasharray="1 1" opacity="0.35"/>
<line x1="99" y1="591.5" x2="1207" y2="591.5" stroke="#d8d8d8" stroke-width="1" stroke-dasharray="1 1" opacity="0.35"/>
<line x1="99" y1="579.5" x2="1207" y2="579.5" stroke="#d8d8d8" stroke-width="1" stroke-dasharray="1 1" opacity="0.35"/>
<line x1="99" y1="566.5" x2="1207" y2="566.5" stroke="#d8d8d8" stroke-width="1" stroke-dasharray="1 1" opacity="0.35"/>
<line x1="99" y1="554.5" x2="1207" y2="554.5" stroke="#d8d8d8" stroke-width="1" stroke-dasharray="1 1" opacity="0.35"/>
<line x1="99" y1="541.5" x2="1207" y2="541.5" stroke="#d8d8d8" stroke-width="1" stroke-dasharray="1 1" opacity="0.35"/>
<line x1="99" y1="529.5" x2="1207" y2="529.5" stroke="#d8d8d8" stroke-width="1" stroke-dasharray="1 1" opacity="0.35"/>
<line x1="99" y1="516.5" x2="1207" y2="516.5" stroke="#d8d8d8" stroke-width="1" stroke-dasharray="1 1" opacity="0.35"/>
<line x1="99" y1="503.5" x2="1207" y2="503.5" stroke="#d8d8d8" stroke-width="1" stroke-dasharray="1 1" opacity="0.35"/>
<line x1="99" y1="491.5" x2="1207" y2="491.5" stroke="#d8d8d8" stroke-width="1" stroke-dasharray="1 1" opacity="0.35"/>
<line x1="99" y1="478.5" x2="1207" y2="478.5" stroke="#d8d8d8" stroke-width="1" stroke-dasharray="1 1" opacity="0.35"/>
<line x1="99" y1="466.5" x2="1207" y2="466.5" stroke="#d8d8d8" stroke-width="1" stroke-dasharray="1 1" opacity="0.35"/>
<rect x="97" y="450" width="1111" height="1" fill="#e0e0e0"/>
<rect x="97" y="450" width="2" height="258" fill="#e8e8e8"/>
<rect x="1207" y="450" width="1.5" height="258" fill="#f0f0f0"/>
<rect x="97" y="706.5" width="1111" height="2" fill="#c8c8c8"/>
<g clip-path="url(#c3)">
<polyline points="100.5,488.0 110.4,488.0 112.2,490.9 161.2,490.9 163.4,492.6 185.4,492.6 187.7,495.7 191.0,492.6 214.1,492.6 215.2,490.9 229.6,490.9 231.8,488.0 239.5,488.0 240.6,490.9 241.7,488.0 267.1,488.0 268.2,485.8 277.0,485.8 278.1,482.9 335.5,482.9 336.6,485.8 346.5,485.8 347.6,482.9 356.4,482.9 357.5,480.7 378.5,480.7 380.7,482.9 382.9,480.7 397.1,480.7 398.7,478.1 423.6,478.1 425.8,480.7 431.3,480.7 433.1,478.1 446.8,478.1 448.5,480.7 514.0,480.7 516.3,478.1 518.5,480.7 532.8,480.7 534.6,482.9 550.5,482.9 552.2,485.8 563.7,485.8 565.5,482.9 569.2,488.0 573.6,490.9 579.1,495.7 585.8,498.0 591.3,502.8 599.0,507.9 633.2,507.9 637.6,504.1 643.1,510.7 653.0,510.7 655.2,513.0 667.4,513.0 668.5,515.0 669.6,513.0 682.8,513.0 684.9,510.7 691.5,507.9 699.3,505.0 704.8,502.8 718.0,502.8 720.2,505.7 733.5,505.7 735.7,507.9 752.2,507.9 754.4,505.7 758.0,505.0 762.1,500.6 767.7,498.0 772.0,494.6 779.8,488.0 787.5,488.0 788.6,485.8 795.0,485.8 796.3,482.9 805.0,482.9 808.5,478.1 816.0,478.1 818.4,475.9 826.0,475.9 827.2,473.2 839.0,473.2 840.5,471.0 857.0,471.0 858.1,467.7 908.8,467.7 912.1,466.0 914.5,467.7 917.7,466.0 994.4,465.8 997.2,468.0 1001.8,467.0 1004.5,468.0 1008.2,465.8 1019.2,465.8 1022.0,468.0 1028.4,468.0 1030.3,465.8 1056.9,465.8 1059.7,467.0 1063.3,465.8 1066.1,468.0 1152.5,468.0 1156.2,465.8 1159.9,468.0 1167.2,468.0 1169.0,465.8 1204.0,465.8" fill="none" stroke="#7878f0" stroke-width="2.0" stroke-linejoin="miter" />
<polyline points="100.5,639.7 108.2,640.6 119.3,643.9 150.2,643.9 161.2,646.1 170.0,647.2 185.4,647.2 187.7,649.0 192.1,647.6 196.5,648.5 214.1,648.1 234.0,647.2 262.7,648.3 266.0,649.0 271.5,647.6 278.1,646.1 282.5,644.6 333.3,642.8 337.7,644.2 345.4,645.0 357.5,642.4 361.9,638.8 377.4,638.8 380.7,641.0 397.1,641.0 399.3,638.4 410.0,637.5 422.5,635.5 429.1,636.6 438.0,635.7 455.6,636.6 473.2,634.4 495.3,632.9 513.0,629.1 535.0,624.7 550.5,621.8 557.1,622.9 561.5,621.8 565.9,618.1 576.9,620.3 588.0,620.3 601.2,623.4 605.6,622.5 634.3,623.0 638.7,620.7 643.1,623.0 660.8,620.3 675.0,619.6 683.8,619.6 686.0,617.4 697.1,616.8 699.3,615.2 708.0,615.9 719.1,614.1 723.5,615.9 730.2,613.7 736.8,615.2 750.0,615.2 752.2,616.3 754.4,613.7 767.7,613.7 780.9,610.8 794.1,610.1 803.0,611.5 816.2,609.7 827.2,608.6 833.8,609.7 842.7,608.6 855.9,609.7 858.1,607.5 875.7,607.5 883.5,611.5 908.8,611.5 913.2,610.1 917.5,610.8 994.4,610.8 997.2,612.3 1002.0,611.4 1004.5,612.3 1007.3,610.8 1019.2,610.8 1022.0,613.2 1028.4,613.2 1031.0,612.3 1040.4,610.8 1056.9,610.8 1059.7,611.9 1063.3,610.8 1066.1,611.9 1096.4,611.9 1099.2,610.4 1102.9,611.9 1154.3,611.9 1156.2,610.8 1159.9,611.9 1167.2,611.9 1169.0,610.8 1204.0,610.8" fill="none" stroke="#d820d8" stroke-width="2.0" stroke-linejoin="miter" />
<polyline points="100.5,623.6 108.2,624.7 119.3,626.9 148.0,626.9 154.6,628.5 170.0,629.1 185.4,629.1 194.3,630.9 229.6,631.8 260.5,631.8 264.9,633.1 275.9,633.1 282.5,631.3 293.5,629.6 311.2,628.9 342.1,628.9 346.5,630.0 352.0,629.6 361.9,626.9 381.8,626.9 386.2,628.9 396.0,628.9 399.3,627.4 409.3,627.0 424.7,624.7 438.0,623.4 471.0,623.4 484.3,621.2 504.1,618.1 521.8,615.2 539.4,610.8 557.1,607.1 568.1,603.5 579.1,600.9 592.4,598.7 601.2,598.2 605.6,597.6 612.2,598.7 634.3,598.7 643.1,595.4 658.5,592.5 671.8,592.1 683.8,591.0 699.3,591.6 703.7,592.7 710.0,591.6 725.7,591.0 730.2,589.9 756.6,589.9 763.2,592.1 769.9,593.8 780.9,594.7 787.5,596.9 798.5,597.6 807.4,599.3 829.4,599.3 831.6,600.9 847.1,601.3 849.3,602.0 878.0,602.0 882.4,604.6 1017.4,604.9 1020.1,606.0 1040.4,606.0 1042.2,604.9 1097.4,604.9 1100.1,603.6 1102.9,604.9 1204.0,604.9" fill="none" stroke="#10d010" stroke-width="2.0" stroke-linejoin="miter" />
<polyline points="100.0,703.8 776.2,703.8 778.4,700.4 815.1,700.4 816.6,699.7 840.9,699.7 842.4,695.6 857.8,695.6 859.3,692.6 864.4,692.6 865.9,690.9 869.6,688.7 923.2,688.7 925.4,686.9 1198.8,686.9 1200.1,704.3 1204.1,704.3" fill="none" stroke="#ff0000" stroke-width="2.3" stroke-linejoin="miter" />
<line x1="438.8" y1="681" x2="438.8" y2="707" stroke="#e070e0" stroke-width="1.2" stroke-dasharray="1.5 1"/>
<line x1="908.8" y1="681" x2="908.8" y2="707" stroke="#e070e0" stroke-width="1.2" stroke-dasharray="1.5 1"/>
<text x="441" y="680" fill="#d478f0" font-size="10" text-anchor="middle" >Sun Rise</text>
</g>
<g clip-path="url(#t3)">
<rect x="36" y="450" width="2" height="258" fill="#7070f0"/>
<rect x="31" y="702.7" width="5" height="1.3" fill="#7070f0"/>
<text x="30" y="705.5999999999999" fill="#7080ff" font-size="8.5" text-anchor="end" >0</text>
<rect x="33" y="700.3" width="3" height="1" fill="#6060d0"/>
<rect x="33" y="697.8" width="3" height="1" fill="#6060d0"/>
<rect x="33" y="695.3" width="3" height="1" fill="#6060d0"/>
<rect x="33" y="692.7" width="3" height="1" fill="#6060d0"/>
<rect x="31" y="690.1" width="5" height="1.3" fill="#7070f0"/>
<text x="30" y="693.0349999999999" fill="#7080ff" font-size="8.5" text-anchor="end" >5</text>
<rect x="33" y="687.7" width="3" height="1" fill="#6060d0"/>
<rect x="33" y="685.2" width="3" height="1" fill="#6060d0"/>
<rect x="33" y="682.7" width="3" height="1" fill="#6060d0"/>
<rect x="33" y="680.2" width="3" height="1" fill="#6060d0"/>
<rect x="31" y="677.6" width="5" height="1.3" fill="#7070f0"/>
<text x="30" y="680.4699999999999" fill="#7080ff" font-size="8.5" text-anchor="end" >10</text>
<rect x="33" y="675.2" width="3" height="1" fill="#6060d0"/>
<rect x="33" y="672.6" width="3" height="1" fill="#6060d0"/>
<rect x="33" y="670.1" width="3" height="1" fill="#6060d0"/>
<rect x="33" y="667.6" width="3" height="1" fill="#6060d0"/>
<rect x="31" y="665.0" width="5" height="1.3" fill="#7070f0"/>
<text x="30" y="667.9049999999999" fill="#7080ff" font-size="8.5" text-anchor="end" >15</text>
<rect x="33" y="662.6" width="3" height="1" fill="#6060d0"/>
<rect x="33" y="660.1" width="3" height="1" fill="#6060d0"/>
<rect x="33" y="657.6" width="3" height="1" fill="#6060d0"/>
<rect x="33" y="655.1" width="3" height="1" fill="#6060d0"/>
<rect x="31" y="652.4" width="5" height="1.3" fill="#7070f0"/>
<text x="30" y="655.3399999999999" fill="#7080ff" font-size="8.5" text-anchor="end" >20</text>
<rect x="33" y="650.0" width="3" height="1" fill="#6060d0"/>
<rect x="33" y="647.5" width="3" height="1" fill="#6060d0"/>
<rect x="33" y="645.0" width="3" height="1" fill="#6060d0"/>
<rect x="33" y="642.5" width="3" height="1" fill="#6060d0"/>
<rect x="31" y="639.9" width="5" height="1.3" fill="#7070f0"/>
<text x="30" y="642.7749999999999" fill="#7080ff" font-size="8.5" text-anchor="end" >25</text>
<rect x="33" y="637.5" width="3" height="1" fill="#6060d0"/>
<rect x="33" y="634.9" width="3" height="1" fill="#6060d0"/>
<rect x="33" y="632.4" width="3" height="1" fill="#6060d0"/>
<rect x="33" y="629.9" width="3" height="1" fill="#6060d0"/>
<rect x="31" y="627.3" width="5" height="1.3" fill="#7070f0"/>
<text x="30" y="630.2099999999999" fill="#7080ff" font-size="8.5" text-anchor="end" >30</text>
<rect x="33" y="624.9" width="3" height="1" fill="#6060d0"/>
<rect x="33" y="622.4" width="3" height="1" fill="#6060d0"/>
<rect x="33" y="619.9" width="3" height="1" fill="#6060d0"/>
<rect x="33" y="617.4" width="3" height="1" fill="#6060d0"/>
<rect x="31" y="614.7" width="5" height="1.3" fill="#7070f0"/>
<text x="30" y="617.6449999999999" fill="#7080ff" font-size="8.5" text-anchor="end" >35</text>
<rect x="33" y="612.3" width="3" height="1" fill="#6060d0"/>
<rect x="33" y="609.8" width="3" height="1" fill="#6060d0"/>
<rect x="33" y="607.3" width="3" height="1" fill="#6060d0"/>
<rect x="33" y="604.8" width="3" height="1" fill="#6060d0"/>
<rect x="31" y="602.2" width="5" height="1.3" fill="#7070f0"/>
<text x="30" y="605.0799999999999" fill="#7080ff" font-size="8.5" text-anchor="end" >40</text>
<rect x="33" y="599.8" width="3" height="1" fill="#6060d0"/>
<rect x="33" y="597.3" width="3" height="1" fill="#6060d0"/>
<rect x="33" y="594.7" width="3" height="1" fill="#6060d0"/>
<rect x="33" y="592.2" width="3" height="1" fill="#6060d0"/>
<rect x="31" y="589.6" width="5" height="1.3" fill="#7070f0"/>
<text x="30" y="592.5149999999999" fill="#7080ff" font-size="8.5" text-anchor="end" >45</text>
<rect x="33" y="587.2" width="3" height="1" fill="#6060d0"/>
<rect x="33" y="584.7" width="3" height="1" fill="#6060d0"/>
<rect x="33" y="582.2" width="3" height="1" fill="#6060d0"/>
<rect x="33" y="579.7" width="3" height="1" fill="#6060d0"/>
<rect x="31" y="577.0" width="5" height="1.3" fill="#7070f0"/>
<text x="30" y="579.9499999999999" fill="#7080ff" font-size="8.5" text-anchor="end" >50</text>
<rect x="33" y="574.6" width="3" height="1" fill="#6060d0"/>
<rect x="33" y="572.1" width="3" height="1" fill="#6060d0"/>
<rect x="33" y="569.6" width="3" height="1" fill="#6060d0"/>
<rect x="33" y="567.1" width="3" height="1" fill="#6060d0"/>
<rect x="31" y="564.5" width="5" height="1.3" fill="#7070f0"/>
<text x="30" y="567.3849999999999" fill="#7080ff" font-size="8.5" text-anchor="end" >55</text>
<rect x="33" y="562.1" width="3" height="1" fill="#6060d0"/>
<rect x="33" y="559.6" width="3" height="1" fill="#6060d0"/>
<rect x="33" y="557.0" width="3" height="1" fill="#6060d0"/>
<rect x="33" y="554.5" width="3" height="1" fill="#6060d0"/>
<rect x="31" y="551.9" width="5" height="1.3" fill="#7070f0"/>
<text x="30" y="554.8199999999999" fill="#7080ff" font-size="8.5" text-anchor="end" >60</text>
<rect x="33" y="549.5" width="3" height="1" fill="#6060d0"/>
<rect x="33" y="547.0" width="3" height="1" fill="#6060d0"/>
<rect x="33" y="544.5" width="3" height="1" fill="#6060d0"/>
<rect x="33" y="542.0" width="3" height="1" fill="#6060d0"/>
<rect x="31" y="539.4" width="5" height="1.3" fill="#7070f0"/>
<text x="30" y="542.2549999999999" fill="#7080ff" font-size="8.5" text-anchor="end" >65</text>
<rect x="33" y="536.9" width="3" height="1" fill="#6060d0"/>
<rect x="33" y="534.4" width="3" height="1" fill="#6060d0"/>
<rect x="33" y="531.9" width="3" height="1" fill="#6060d0"/>
<rect x="33" y="529.4" width="3" height="1" fill="#6060d0"/>
<rect x="31" y="526.8" width="5" height="1.3" fill="#7070f0"/>
<text x="30" y="529.6899999999999" fill="#7080ff" font-size="8.5" text-anchor="end" >70</text>
<rect x="33" y="524.4" width="3" height="1" fill="#6060d0"/>
<rect x="33" y="521.9" width="3" height="1" fill="#6060d0"/>
<rect x="33" y="519.4" width="3" height="1" fill="#6060d0"/>
<rect x="33" y="516.8" width="3" height="1" fill="#6060d0"/>
<rect x="31" y="514.2" width="5" height="1.3" fill="#7070f0"/>
<text x="30" y="517.1249999999999" fill="#7080ff" font-size="8.5" text-anchor="end" >75</text>
<rect x="33" y="511.8" width="3" height="1" fill="#6060d0"/>
<rect x="33" y="509.3" width="3" height="1" fill="#6060d0"/>
<rect x="33" y="506.8" width="3" height="1" fill="#6060d0"/>
<rect x="33" y="504.3" width="3" height="1" fill="#6060d0"/>
<rect x="31" y="501.7" width="5" height="1.3" fill="#7070f0"/>
<text x="30" y="504.56" fill="#7080ff" font-size="8.5" text-anchor="end" >80</text>
<rect x="33" y="499.2" width="3" height="1" fill="#6060d0"/>
<rect x="33" y="496.7" width="3" height="1" fill="#6060d0"/>
<rect x="33" y="494.2" width="3" height="1" fill="#6060d0"/>
<rect x="33" y="491.7" width="3" height="1" fill="#6060d0"/>
<rect x="31" y="489.1" width="5" height="1.3" fill="#7070f0"/>
<text x="30" y="491.99499999999995" fill="#7080ff" font-size="8.5" text-anchor="end" >85</text>
<rect x="33" y="486.7" width="3" height="1" fill="#6060d0"/>
<rect x="33" y="484.2" width="3" height="1" fill="#6060d0"/>
<rect x="33" y="481.7" width="3" height="1" fill="#6060d0"/>
<rect x="33" y="479.1" width="3" height="1" fill="#6060d0"/>
<rect x="31" y="476.5" width="5" height="1.3" fill="#7070f0"/>
<text x="30" y="479.43" fill="#7080ff" font-size="8.5" text-anchor="end" >90</text>
<rect x="33" y="474.1" width="3" height="1" fill="#6060d0"/>
<rect x="33" y="471.6" width="3" height="1" fill="#6060d0"/>
<rect x="33" y="469.1" width="3" height="1" fill="#6060d0"/>
<rect x="33" y="466.6" width="3" height="1" fill="#6060d0"/>
<rect x="31" y="464.0" width="5" height="1.3" fill="#7070f0"/>
<text x="30" y="466.86499999999995" fill="#7080ff" font-size="8.5" text-anchor="end" >95</text>
<rect x="33" y="461.6" width="3" height="1" fill="#6060d0"/>
<rect x="33" y="459.0" width="3" height="1" fill="#6060d0"/>
<rect x="33" y="456.5" width="3" height="1" fill="#6060d0"/>
<rect x="33" y="454.0" width="3" height="1" fill="#6060d0"/>
<rect x="31" y="451.4" width="5" height="1.3" fill="#7070f0"/>
<text x="30" y="454.3" fill="#7080ff" font-size="8.5" text-anchor="end" >00</text>
<rect x="92" y="702.9" width="5" height="1.4" fill="#e00000"/>
<text x="91.5" y="705.8" fill="#ff0000" font-size="8.5" text-anchor="end" >0</text>
<rect x="94" y="692.4" width="3" height="1.4" fill="#e00000"/>
<rect x="94" y="681.9" width="3" height="1.4" fill="#e00000"/>
<rect x="94" y="671.4" width="3" height="1.4" fill="#e00000"/>
<rect x="92" y="660.9" width="5" height="1.4" fill="#e00000"/>
<text x="91.5" y="663.8" fill="#ff0000" font-size="8.5" text-anchor="end" >5</text>
<rect x="94" y="650.4" width="3" height="1.4" fill="#e00000"/>
<rect x="94" y="639.9" width="3" height="1.4" fill="#e00000"/>
<rect x="94" y="629.4" width="3" height="1.4" fill="#e00000"/>
<rect x="92" y="618.9" width="5" height="1.4" fill="#e00000"/>
<text x="91.5" y="621.8" fill="#ff0000" font-size="8.5" text-anchor="end" >10</text>
<rect x="94" y="608.4" width="3" height="1.4" fill="#e00000"/>
<rect x="94" y="597.9" width="3" height="1.4" fill="#e00000"/>
<rect x="94" y="587.4" width="3" height="1.4" fill="#e00000"/>
<rect x="92" y="576.9" width="5" height="1.4" fill="#e00000"/>
<text x="91.5" y="579.8" fill="#ff0000" font-size="8.5" text-anchor="end" >15</text>
<rect x="94" y="566.4" width="3" height="1.4" fill="#e00000"/>
<rect x="94" y="555.9" width="3" height="1.4" fill="#e00000"/>
<rect x="94" y="545.4" width="3" height="1.4" fill="#e00000"/>
<rect x="92" y="534.9" width="5" height="1.4" fill="#e00000"/>
<text x="91.5" y="537.8" fill="#ff0000" font-size="8.5" text-anchor="end" >20</text>
<rect x="94" y="524.4" width="3" height="1.4" fill="#e00000"/>
<rect x="94" y="513.9" width="3" height="1.4" fill="#e00000"/>
<rect x="94" y="503.4" width="3" height="1.4" fill="#e00000"/>
<rect x="92" y="492.9" width="5" height="1.4" fill="#e00000"/>
<text x="91.5" y="495.8" fill="#ff0000" font-size="8.5" text-anchor="end" >25</text>
<rect x="94" y="482.4" width="3" height="1.4" fill="#e00000"/>
<rect x="94" y="471.9" width="3" height="1.4" fill="#e00000"/>
<rect x="94" y="461.4" width="3" height="1.4" fill="#e00000"/>
<rect x="92" y="450.9" width="5" height="1.4" fill="#e00000"/>
<text x="91.5" y="453.8" fill="#ff0000" font-size="8.5" text-anchor="end" >30</text>
<rect x="1208.5" y="702.4" width="4" height="1.4" fill="#00e000"/>
<text x="1215" y="705.3" fill="#00ff00" font-size="8.5" text-anchor="start" >0</text>
<rect x="1208.5" y="696.1" width="2.5" height="1.2" fill="#00c000"/>
<rect x="1208.5" y="689.8" width="4" height="1.4" fill="#00e000"/>
<text x="1215" y="692.74" fill="#00ff00" font-size="8.5" text-anchor="start" >2</text>
<rect x="1208.5" y="683.6" width="2.5" height="1.2" fill="#00c000"/>
<rect x="1208.5" y="677.3" width="4" height="1.4" fill="#00e000"/>
<text x="1215" y="680.18" fill="#00ff00" font-size="8.5" text-anchor="start" >4</text>
<rect x="1208.5" y="671.0" width="2.5" height="1.2" fill="#00c000"/>
<rect x="1208.5" y="664.7" width="4" height="1.4" fill="#00e000"/>
<text x="1215" y="667.62" fill="#00ff00" font-size="8.5" text-anchor="start" >6</text>
<rect x="1208.5" y="658.4" width="2.5" height="1.2" fill="#00c000"/>
<rect x="1208.5" y="652.2" width="4" height="1.4" fill="#00e000"/>
<text x="1215" y="655.06" fill="#00ff00" font-size="8.5" text-anchor="start" >8</text>
<rect x="1208.5" y="645.9" width="2.5" height="1.2" fill="#00c000"/>
<rect x="1208.5" y="639.6" width="4" height="1.4" fill="#00e000"/>
<text x="1215" y="642.5" fill="#00ff00" font-size="8.5" text-anchor="start" >10</text>
<rect x="1208.5" y="633.3" width="2.5" height="1.2" fill="#00c000"/>
<rect x="1208.5" y="627.0" width="4" height="1.4" fill="#00e000"/>
<text x="1215" y="629.9399999999999" fill="#00ff00" font-size="8.5" text-anchor="start" >12</text>
<rect x="1208.5" y="620.8" width="2.5" height="1.2" fill="#00c000"/>
<rect x="1208.5" y="614.5" width="4" height="1.4" fill="#00e000"/>
<text x="1215" y="617.38" fill="#00ff00" font-size="8.5" text-anchor="start" >14</text>
<rect x="1208.5" y="608.2" width="2.5" height="1.2" fill="#00c000"/>
<rect x="1208.5" y="601.9" width="4" height="1.4" fill="#00e000"/>
<text x="1215" y="604.8199999999999" fill="#00ff00" font-size="8.5" text-anchor="start" >16</text>
<rect x="1208.5" y="595.6" width="2.5" height="1.2" fill="#00c000"/>
<rect x="1208.5" y="589.4" width="4" height="1.4" fill="#00e000"/>
<text x="1215" y="592.26" fill="#00ff00" font-size="8.5" text-anchor="start" >18</text>
<rect x="1208.5" y="583.1" width="2.5" height="1.2" fill="#00c000"/>
<rect x="1208.5" y="576.8" width="4" height="1.4" fill="#00e000"/>
<text x="1215" y="579.6999999999999" fill="#00ff00" font-size="8.5" text-anchor="start" >20</text>
<rect x="1208.5" y="570.5" width="2.5" height="1.2" fill="#00c000"/>
<rect x="1208.5" y="564.2" width="4" height="1.4" fill="#00e000"/>
<text x="1215" y="567.14" fill="#00ff00" font-size="8.5" text-anchor="start" >22</text>
<rect x="1208.5" y="558.0" width="2.5" height="1.2" fill="#00c000"/>
<rect x="1208.5" y="551.7" width="4" height="1.4" fill="#00e000"/>
<text x="1215" y="554.5799999999999" fill="#00ff00" font-size="8.5" text-anchor="start" >24</text>
<rect x="1208.5" y="545.4" width="2.5" height="1.2" fill="#00c000"/>
<rect x="1208.5" y="539.1" width="4" height="1.4" fill="#00e000"/>
<text x="1215" y="542.02" fill="#00ff00" font-size="8.5" text-anchor="start" >26</text>
<rect x="1208.5" y="532.8" width="2.5" height="1.2" fill="#00c000"/>
<rect x="1208.5" y="526.6" width="4" height="1.4" fill="#00e000"/>
<text x="1215" y="529.4599999999999" fill="#00ff00" font-size="8.5" text-anchor="start" >28</text>
<rect x="1208.5" y="520.3" width="2.5" height="1.2" fill="#00c000"/>
<rect x="1208.5" y="514.0" width="4" height="1.4" fill="#00e000"/>
<text x="1215" y="516.9" fill="#00ff00" font-size="8.5" text-anchor="start" >30</text>
<rect x="1208.5" y="507.7" width="2.5" height="1.2" fill="#00c000"/>
<rect x="1208.5" y="501.4" width="4" height="1.4" fill="#00e000"/>
<text x="1215" y="504.34" fill="#00ff00" font-size="8.5" text-anchor="start" >32</text>
<rect x="1208.5" y="495.2" width="2.5" height="1.2" fill="#00c000"/>
<rect x="1208.5" y="488.9" width="4" height="1.4" fill="#00e000"/>
<text x="1215" y="491.78000000000003" fill="#00ff00" font-size="8.5" text-anchor="start" >34</text>
<rect x="1208.5" y="482.6" width="2.5" height="1.2" fill="#00c000"/>
<rect x="1208.5" y="476.3" width="4" height="1.4" fill="#00e000"/>
<text x="1215" y="479.21999999999997" fill="#00ff00" font-size="8.5" text-anchor="start" >36</text>
<rect x="1208.5" y="470.0" width="2.5" height="1.2" fill="#00c000"/>
<rect x="1208.5" y="463.8" width="4" height="1.4" fill="#00e000"/>
<text x="1215" y="466.66" fill="#00ff00" font-size="8.5" text-anchor="start" >38</text>
<rect x="1208.5" y="457.5" width="2.5" height="1.2" fill="#00c000"/>
<rect x="1208.5" y="451.2" width="4" height="1.4" fill="#00e000"/>
<text x="1215" y="454.09999999999997" fill="#00ff00" font-size="8.5" text-anchor="start" >40</text>
</g>
<text x="187.7" y="721" fill="#ffff00" font-size="8.5" text-anchor="middle" >02</text>
<text x="279.9" y="721" fill="#ffff00" font-size="8.5" text-anchor="middle" >04</text>
<text x="372.1" y="721" fill="#ffff00" font-size="8.5" text-anchor="middle" >06</text>
<text x="464.3" y="721" fill="#ffff00" font-size="8.5" text-anchor="middle" >08</text>
<text x="556.5" y="721" fill="#ffff00" font-size="8.5" text-anchor="middle" >10</text>
<text x="648.7" y="721" fill="#ffff00" font-size="8.5" text-anchor="middle" >12</text>
<text x="740.9" y="721" fill="#ffff00" font-size="8.5" text-anchor="middle" >14</text>
<text x="833.1" y="721" fill="#ffff00" font-size="8.5" text-anchor="middle" >16</text>
<text x="925.3000000000001" y="721" fill="#ffff00" font-size="8.5" text-anchor="middle" >18</text>
<text x="1017.5" y="721" fill="#ffff00" font-size="8.5" text-anchor="middle" >20</text>
<text x="1109.7" y="721" fill="#ffff00" font-size="8.5" text-anchor="middle" >22</text>
<text x="1201.9" y="721" fill="#ffff00" font-size="8.5" text-anchor="middle" >00</text>
<rect x="95.0" y="708.5" width="1" height="3" fill="#909090"/>
<rect x="118.0" y="708.5" width="1" height="2" fill="#909090"/>
<rect x="141.1" y="708.5" width="1" height="2" fill="#909090"/>
<rect x="164.2" y="708.5" width="1" height="2" fill="#909090"/>
<rect x="187.2" y="708.5" width="1" height="3" fill="#909090"/>
<rect x="210.2" y="708.5" width="1" height="2" fill="#909090"/>
<rect x="233.3" y="708.5" width="1" height="2" fill="#909090"/>
<rect x="256.4" y="708.5" width="1" height="2" fill="#909090"/>
<rect x="279.4" y="708.5" width="1" height="3" fill="#909090"/>
<rect x="302.5" y="708.5" width="1" height="2" fill="#909090"/>
<rect x="325.5" y="708.5" width="1" height="2" fill="#909090"/>
<rect x="348.6" y="708.5" width="1" height="2" fill="#909090"/>
<rect x="371.6" y="708.5" width="1" height="3" fill="#909090"/>
<rect x="394.7" y="708.5" width="1" height="2" fill="#909090"/>
<rect x="417.7" y="708.5" width="1" height="2" fill="#909090"/>
<rect x="440.8" y="708.5" width="1" height="2" fill="#909090"/>
<rect x="463.8" y="708.5" width="1" height="3" fill="#909090"/>
<rect x="486.9" y="708.5" width="1" height="2" fill="#909090"/>
<rect x="509.9" y="708.5" width="1" height="2" fill="#909090"/>
<rect x="533.0" y="708.5" width="1" height="2" fill="#909090"/>
<rect x="556.0" y="708.5" width="1" height="3" fill="#909090"/>
<rect x="579.0" y="708.5" width="1" height="2" fill="#909090"/>
<rect x="602.1" y="708.5" width="1" height="2" fill="#909090"/>
<rect x="625.1" y="708.5" width="1" height="2" fill="#909090"/>
<rect x="648.2" y="708.5" width="1" height="3" fill="#909090"/>
<rect x="671.2" y="708.5" width="1" height="2" fill="#909090"/>
<rect x="694.3" y="708.5" width="1" height="2" fill="#909090"/>
<rect x="717.4" y="708.5" width="1" height="2" fill="#909090"/>
<rect x="740.4" y="708.5" width="1" height="3" fill="#909090"/>
<rect x="763.5" y="708.5" width="1" height="2" fill="#909090"/>
<rect x="786.5" y="708.5" width="1" height="2" fill="#909090"/>
<rect x="809.6" y="708.5" width="1" height="2" fill="#909090"/>
<rect x="832.6" y="708.5" width="1" height="3" fill="#909090"/>
<rect x="855.6" y="708.5" width="1" height="2" fill="#909090"/>
<rect x="878.7" y="708.5" width="1" height="2" fill="#909090"/>
<rect x="901.8" y="708.5" width="1" height="2" fill="#909090"/>
<rect x="924.8" y="708.5" width="1" height="3" fill="#909090"/>
<rect x="947.9" y="708.5" width="1" height="2" fill="#909090"/>
<rect x="970.9" y="708.5" width="1" height="2" fill="#909090"/>
<rect x="994.0" y="708.5" width="1" height="2" fill="#909090"/>
<rect x="1017.0" y="708.5" width="1" height="3" fill="#909090"/>
<rect x="1040.1" y="708.5" width="1" height="2" fill="#909090"/>
<rect x="1063.1" y="708.5" width="1" height="2" fill="#909090"/>
<rect x="1086.2" y="708.5" width="1" height="2" fill="#909090"/>
<rect x="1109.2" y="708.5" width="1" height="3" fill="#909090"/>
<rect x="1132.2" y="708.5" width="1" height="2" fill="#909090"/>
<rect x="1155.3" y="708.5" width="1" height="2" fill="#909090"/>
<rect x="1178.4" y="708.5" width="1" height="2" fill="#909090"/>
<rect x="1201.4" y="708.5" width="1" height="3" fill="#909090"/>
<text x="440" y="721" fill="#ffff00" font-size="8.5" text-anchor="middle" >Sun Rise</text>
<text x="908" y="721" fill="#ffff00" font-size="8.5" text-anchor="middle" >Sun Set</text>
</svg></body></html>
